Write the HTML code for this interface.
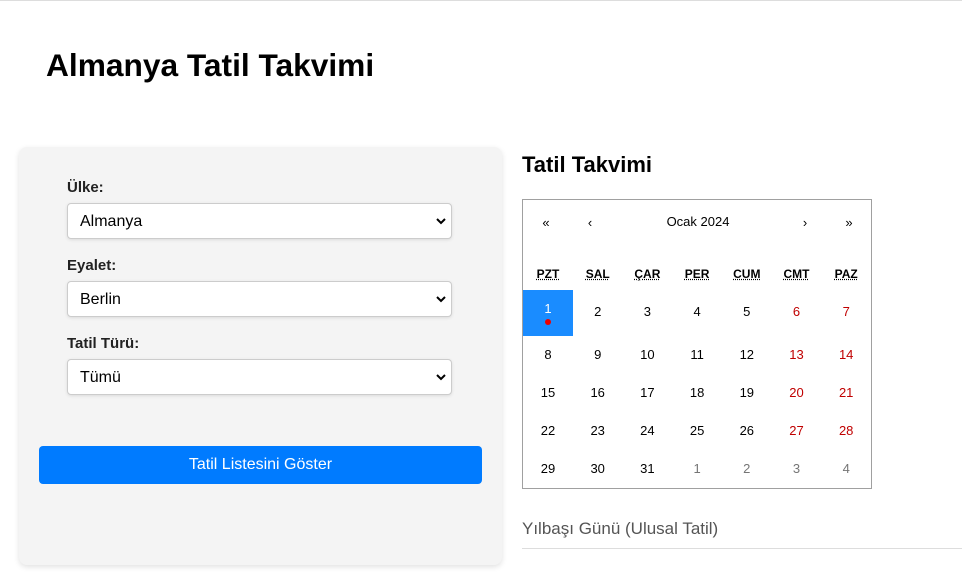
<!DOCTYPE html>
<html><head><meta charset="utf-8"><style>
*{box-sizing:border-box;margin:0;padding:0}
body{width:962px;height:584px;background:#fff;font-family:"Liberation Sans",sans-serif;position:relative;overflow:hidden}
.a{position:absolute}
h1{position:absolute;left:46px;top:47px;font-size:31.7px;font-weight:bold;color:#000}
.panel{left:19px;top:147px;width:483px;height:418px;background:#f4f4f4;border-radius:8px;box-shadow:0 2px 6px rgba(0,0,0,.12)}
.lbl{left:67px;font-size:15px;font-weight:bold;color:#222}
.sel{left:67px;width:385px;height:36px;background:#fff;border:1px solid #ccc;border-radius:4px;box-shadow:0 1px 3px rgba(0,0,0,.1);font-size:16px;padding:9px 0 0 12px;color:#000}
.sel svg{position:absolute;right:5px;top:13px}
.btn{left:39px;top:446px;width:443px;height:38px;background:#007bff;border-radius:4px;color:#fff;font-size:16px;text-align:center;line-height:38px}
h2{position:absolute;left:522px;top:152px;font-size:22px;font-weight:bold}
.cal{left:522px;top:199px;width:350px;height:290px;border:1px solid #a0a0a0}
.c{position:absolute;width:50px;text-align:center;font-size:13px;color:#000}
.h{font-weight:bold;font-size:12px;text-decoration:underline dotted}
.r{color:#c00000}.g{color:#757575}
</style></head><body>
<div class="a" style="left:0;top:0;width:962px;height:1px;background:#ddd"></div>
<h1>Almanya Tatil Takvimi</h1>
<div class="a panel"></div>
<div class="a lbl" style="top:179px">Ülke:</div>
<div class="a sel" style="top:203px">Almanya<svg width="10" height="8" viewBox="0 0 10 8"><path d="M1 2l4 4 4-4" stroke="#000" stroke-width="2" fill="none"/></svg></div>
<div class="a lbl" style="top:257px">Eyalet:</div>
<div class="a sel" style="top:281px">Berlin<svg width="10" height="8" viewBox="0 0 10 8"><path d="M1 2l4 4 4-4" stroke="#000" stroke-width="2" fill="none"/></svg></div>
<div class="a lbl" style="top:335px">Tatil Türü:</div>
<div class="a sel" style="top:359px">Tümü<svg width="10" height="8" viewBox="0 0 10 8"><path d="M1 2l4 4 4-4" stroke="#000" stroke-width="2" fill="none"/></svg></div>
<div class="a btn">Tatil Listesini Göster</div>
<h2>Tatil Takvimi</h2>
<div class="a cal">
<div class="c" style="left:-2px;top:15px">«</div>
<div class="c" style="left:42px;top:15px">‹</div>
<div class="c" style="left:100px;top:14px;width:150px">Ocak 2024</div>
<div class="c" style="left:257px;top:15px">›</div>
<div class="c" style="left:301px;top:15px">»</div>
<div style="position:absolute;left:0;top:90px;width:50px;height:46px;background:#1a8cff"></div>
<div id="g"></div>
</div>
<div class="a" style="left:522px;top:519px;font-size:17px;color:#555">Yılbaşı Günü (Ulusal Tatil)</div>
<div class="a" style="left:522px;top:548px;width:440px;height:1px;background:#ddd"></div>
<script>
var g=document.querySelector('.cal'),h=['PZT','SAL','ÇAR','PER','CUM','CMT','PAZ'],s='';
h.forEach(function(t,i){s+='<div class="c h" style="left:'+(i*49.7)+'px;top:67px">'+t+'</div>'});
var rows=[[1,2,3,4,5,6,7],[8,9,10,11,12,13,14],[15,16,17,18,19,20,21],[22,23,24,25,26,27,28],[29,30,31,1,2,3,4]],tops=[104,147,185,223,261];
rows.forEach(function(r,ri){r.forEach(function(d,i){var cl=ri==4&&i>2?'g':(i>4?'r':'');var st=ri==0&&i==0?'color:#fff;top:'+(tops[0]-3)+'px':'top:'+tops[ri]+'px';s+='<div class="c '+cl+'" style="left:'+(i*49.7)+'px;'+st+'">'+d+'</div>'})});
s+='<div style="position:absolute;left:22px;top:119px;width:6px;height:6px;border-radius:50%;background:#e00"></div>';
document.getElementById('g').innerHTML=s;
</script>
</body></html>
